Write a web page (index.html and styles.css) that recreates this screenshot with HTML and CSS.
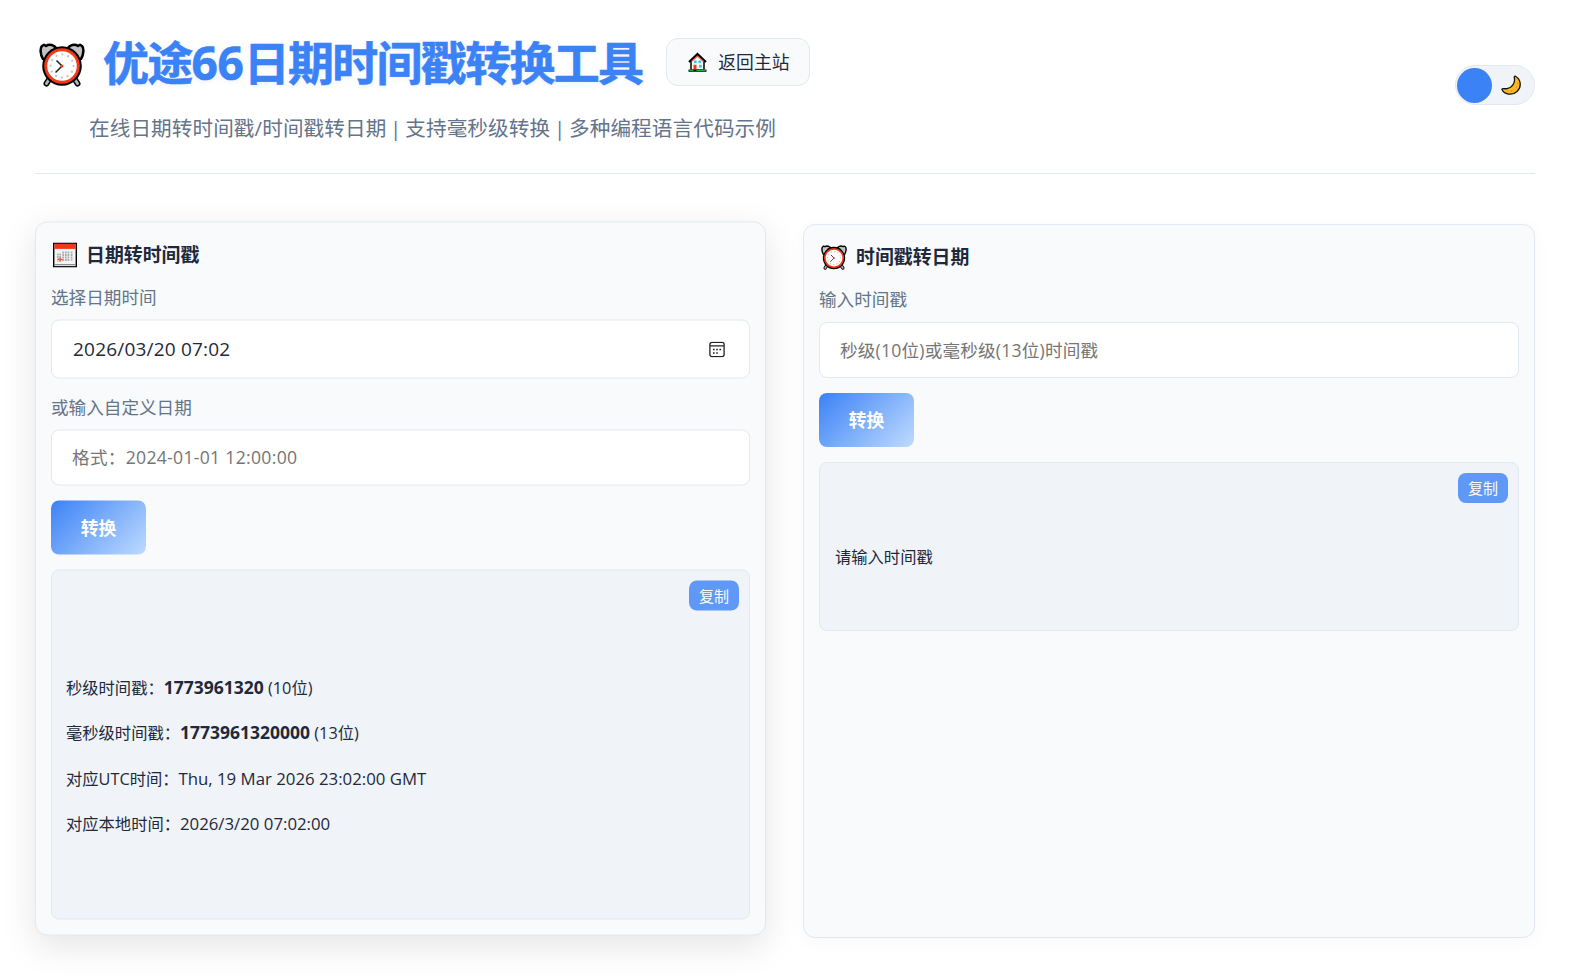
FILE: index.html
```html
<!DOCTYPE html>
<html lang="zh-CN">
<head>
    <meta charset="UTF-8">
    <meta name="viewport" content="width=device-width, initial-scale=1.0">
    <title>优途66日期时间戳转换工具</title>
    <link rel="stylesheet" href="styles.css">
</head>
<body>
    <!-- shared icons -->
    <svg class="sprite" aria-hidden="true">
        <symbol id="icon-clock" viewBox="0 0 46 44">
            <path d="M11 35 L7.500 40.500 M35 35 L38.500 40.500" stroke="#000" stroke-width="6" stroke-linecap="round"/>
            <path d="M11 35 L7.500 40.500 M35 35 L38.500 40.500" stroke="#b4b4b4" stroke-width="3" stroke-linecap="round"/>
            <path d="M4 16 C1 11 1 5 3 3 L5 1.800 L7 3 C9 1.500 12 1.500 15 3 L18 6 L6 17 Z" fill="#c3c3c3" stroke="#000" stroke-width="2.500" stroke-linejoin="round"/>
            <path d="M42 16 C45 11 45 5 43 3 L41 1.800 L39 3 C37 1.500 34 1.500 31 3 L28 6 L40 17 Z" fill="#c3c3c3" stroke="#000" stroke-width="2.500" stroke-linejoin="round"/>
            <circle cx="23" cy="23" r="19.800" fill="#000"/>
            <circle cx="23" cy="23" r="17.800" fill="#f03a17"/>
            <circle cx="23" cy="23" r="14.800" fill="#fff"/>
            <circle cx="23" cy="23" r="11.500" fill="none" stroke="#c4c4c4" stroke-width="2.200" stroke-linecap="round" stroke-dasharray="0.100 5.921"/>
            <path d="M17.500 17.500 L23 23 L16.500 29.500" fill="none" stroke="#222" stroke-width="1.500"/>
            <circle cx="23" cy="23" r="1.500" fill="#f03a17"/>
        </symbol>
    </svg>

    <div class="container">
        <header class="header">
            <div class="header-main">
                <div class="title-row">
                    <svg class="title-icon"><use href="#icon-clock"/></svg>
                    <h1>优途<span class="num">66</span>日期时间戳转换工具</h1>
                    <a class="back-link" href="#">
                        <svg class="home-icon" viewBox="0 0 19 20">
                            <path d="M3 9 V18 H16 V9 L9.500 3 Z" fill="#f8f8f8" stroke="#000" stroke-width="1.500"/>
                            <path d="M1 10 L9.500 1.800 L18 10" fill="none" stroke="#000" stroke-width="2"/>
                            <path d="M3.500 9.500 L9.500 4 L15.500 9.500" fill="none" stroke="#ef5a45" stroke-width="1.200"/>
                            <rect x="6" y="8.500" width="2.600" height="2.600" fill="#35c8e8"/>
                            <rect x="10.500" y="8.500" width="2.600" height="2.600" fill="#35c8e8"/>
                            <rect x="11" y="12.800" width="2.800" height="2.800" fill="#35c8e8"/>
                            <rect x="5.500" y="12.800" width="3" height="5.700" fill="#ee3a17"/>
                            <path d="M0.500 18.700 H18.500" stroke="#111" stroke-width="2.200"/>
                            <path d="M1.500 18.300 H5.500 M8.500 18.300 H17.500" stroke="#18b53b" stroke-width="1.400"/>
                        </svg>
                        <span>返回主站</span>
                    </a>
                </div>
                <p class="subtitle">在线日期转时间戳/时间戳转日期 | 支持毫秒级转换 | 多种编程语言代码示例</p>
            </div>
            <button class="theme-toggle" aria-label="切换主题">
                <span class="toggle-thumb"></span>
                <svg class="moon-icon" viewBox="0 0 20 20">
                    <path d="M14 1 C20 4 21 12 16 16.500 C11 21 3 19.500 0.900 14.300 C1.500 13 3 14.200 6 13.600 C12 12.500 14.500 7 13.200 2.200 Z" fill="#fdb924" stroke="#111" stroke-width="1.300" stroke-linejoin="round"/>
                    <path d="M16 8 h1 M15 12 h1 M10 16 h1 M6 16 h1" stroke="#f08c1b" stroke-width="1.500"/>
                </svg>
            </button>
        </header>

        <main class="tools">
            <section class="card active">
                <h2>
                    <svg class="card-icon calendar" viewBox="0 0 24 25">
                        <rect x="0.700" y="0.700" width="22.600" height="23.600" fill="#f3f3f3" stroke="#000" stroke-width="1.400"/>
                        <rect x="1.400" y="1.400" width="21.200" height="5" fill="#ee3a17"/>
                        <path d="M1.400 22.200 H22.600" stroke="#777" stroke-width="1"/>
                        <path d="M4.800 11 V19 M7.200 11 V19 M10.200 9 V19 M12.800 9 V19 M15.400 9 V18.500 M18.600 9 V18" stroke="#aaa" stroke-width="1.700" stroke-dasharray="2 0.500"/>
                        <path d="M5 17 H9.500 M7.200 15 V19" stroke="#f05a3c" stroke-width="1.300"/>
                    </svg>
                    <span>日期转时间戳</span>
                </h2>
                <div class="field">
                    <label for="datePicker">选择日期时间</label>
                    <div class="date-input">
                        <input class="date-value" id="datePicker" type="text" value="2026/03/20 07:02">
                        <svg class="picker-icon" viewBox="0 0 16 16">
                            <rect x="0.900" y="0.900" width="14.200" height="14.200" rx="2" fill="none" stroke="#222" stroke-width="1.300"/>
                            <path d="M1 4.300 H15" stroke="#222" stroke-width="1.200"/>
                            <path d="M4 8 H5.600 M7.200 8 H8.800 M10.400 8 H12 M4 11.500 H5.600 M7.200 11.500 H8.800" stroke="#222" stroke-width="1.700"/>
                        </svg>
                    </div>
                </div>
                <div class="field">
                    <label for="customDate">或输入自定义日期</label>
                    <input class="custom-date" id="customDate" type="text" placeholder="格式：2024-01-01 12:00:00">
                </div>
                <button class="convert-btn">转换</button>
                <div class="result result-date">
                    <button class="copy-btn">复制</button>
                    <p>秒级时间戳：<strong>1773961320</strong> (10位)</p>
                    <p>毫秒级时间戳：<strong>1773961320000</strong> (13位)</p>
                    <p>对应UTC时间：<span class="value">Thu, 19 Mar 2026 23:02:00 GMT</span></p>
                    <p>对应本地时间：<span class="value">2026/3/20 07:02:00</span></p>
                </div>
            </section>

            <section class="card">
                <h2>
                    <svg class="card-icon"><use href="#icon-clock"/></svg>
                    <span>时间戳转日期</span>
                </h2>
                <div class="field">
                    <label for="timestamp">输入时间戳</label>
                    <input id="timestamp" type="text" placeholder="秒级(10位)或毫秒级(13位)时间戳">
                </div>
                <button class="convert-btn">转换</button>
                <div class="result">
                    <button class="copy-btn">复制</button>
                    <p>请输入时间戳</p>
                </div>
            </section>
        </main>
    </div>
</body>
</html>
```

FILE: styles.css
```css
:root {
    --primary: #3b82f6;
    --text: #1e293b;
    --muted: #64748b;
    --border: #e2e8f0;
    --card: #f8fafc;
    --panel: #f0f4f9;
}

* {
    box-sizing: border-box;
    margin: 0;
    padding: 0;
}

body {
    min-height: 100vh;
    font-family: "Open Sans", "Noto Sans CJK SC", sans-serif;
    background: white;
    color: var(--text);
}

button, input {
    font-family: inherit;
}

.sprite {
    display: none;
}

.container {
    width: 1500px;
    margin: 0 0 0 35px;
}

.header {
    display: flex;
    justify-content: space-between;
    align-items: flex-start;
    height: 174px;
    padding-top: 35px;
    border-bottom: 1px solid var(--border);
}

.title-row {
    display: flex;
    align-items: center;
    height: 56px;
}

.title-icon {
    width: 46px;
    height: 44px;
    margin: 3px 18px 0 4px;
}

h1 {
    padding-bottom: 2px;
    font-size: 46px;
    line-height: 56px;
    letter-spacing: -1.7px;
    color: var(--primary);
    white-space: nowrap;
    -webkit-text-stroke: 0.6px var(--primary);
    text-shadow: 0 2px 4px rgba(59, 130, 246, 0.1);
}

h1 .num {
    letter-spacing: -0.3px;
}

.back-link {
    display: flex;
    align-items: center;
    gap: 11px;
    width: 144px;
    height: 48px;
    margin: 0 0 2px 24px;
    padding-left: 21px;
    border: 1px solid var(--border);
    border-radius: 12px;
    background: var(--card);
    color: var(--text);
    font-size: 17.8px;
    line-height: 26px;
    text-decoration: none;
    white-space: nowrap;
}

.home-icon {
    width: 19px;
    height: 20px;
}

.subtitle {
    margin: 22px 0 0 54px;
    font-size: 20.6px;
    line-height: 30px;
    letter-spacing: 0.1px;
    word-spacing: -1.7px;
    color: var(--muted);
    white-space: nowrap;
}

.theme-toggle {
    display: flex;
    align-items: center;
    justify-content: space-between;
    width: 80px;
    height: 40px;
    margin-top: 30px;
    padding: 0 13px 0 1px;
    border: 1px solid var(--border);
    border-radius: 20px;
    background: var(--panel);
}

.toggle-thumb {
    width: 35px;
    height: 35px;
    border-radius: 50%;
    background: var(--primary);
}

.moon-icon {
    width: 20px;
    height: 20px;
}

.tools {
    display: grid;
    grid-template-columns: 731px 732px;
    gap: 37px;
    margin-top: 50px;
}

.card {
    height: 714px;
    padding: 15px;
    border: 1px solid var(--border);
    border-radius: 12px;
    background: var(--card);
    box-shadow: 0 4px 20px rgba(0, 0, 0, 0.03);
}

.card.active {
    transform: translateY(-2.5px);
    box-shadow: 0 10px 36px rgba(0, 0, 0, 0.11);
}

h2 {
    display: flex;
    align-items: center;
    gap: 9px;
    height: 34px;
    margin-bottom: 12px;
    padding-left: 2px;
    font-size: 18.9px;
    line-height: 34px;
}

h2 span {
    padding-bottom: 1px;
}

.card-icon {
    width: 26px;
    height: 25px;
}

.card-icon.calendar {
    width: 24px;
}

.field {
    display: flex;
    flex-direction: column;
    margin-bottom: 15px;
}

label {
    margin-bottom: 10px;
    font-size: 17.6px;
    line-height: 26px;
    color: var(--muted);
}

input {
    width: 100%;
    height: 56px;
    padding: 0 20px;
    border: 1px solid var(--border);
    border-radius: 8px;
    background: white;
    color: var(--text);
    font-size: 17.6px;
    letter-spacing: 0.2px;
    outline: none;
}

input::placeholder {
    color: #757575;
}

.custom-date {
    padding-bottom: 2px;
    letter-spacing: 0.3px;
}

.date-input {
    display: flex;
    align-items: center;
    height: 59px;
    padding-right: 24px;
    border: 1px solid var(--border);
    border-radius: 8px;
    background: white;
}

.date-input input {
    height: 57px;
    padding-bottom: 2px;
    padding-left: 21px;
    border: none;
    background: transparent;
    font-size: 19px;
}

.picker-icon {
    flex: none;
    width: 16px;
    height: 16px;
}

.convert-btn {
    display: block;
    width: 95px;
    height: 54px;
    margin-bottom: 15px;
    padding-bottom: 2px;
    border: none;
    border-radius: 8px;
    background: linear-gradient(135deg, var(--primary), #bfdbfe);
    color: white;
    font-size: 17.8px;
    font-weight: bold;
}

.result {
    position: relative;
    display: flex;
    flex-direction: column;
    justify-content: center;
    height: 169px;
    padding: 22px 15px 0;
    border: 1px solid var(--border);
    border-radius: 8px;
    background: var(--panel);
    font-size: 16.3px;
    line-height: 25px;
}

.result-date {
    height: 350px;
    gap: 20.3px;
    padding-top: 21px;
    padding-left: 14px;
}

.result p {
    height: 25px;
}

.result strong {
    font-size: 17.5px;
}

.result .value {
    font-size: 16.8px;
}

.copy-btn {
    position: absolute;
    top: 10px;
    right: 10px;
    width: 50px;
    height: 30px;
    padding-bottom: 2px;
    border: none;
    border-radius: 8px;
    background: var(--primary);
    color: white;
    font-size: 15px;
    opacity: 0.8;
}
```
